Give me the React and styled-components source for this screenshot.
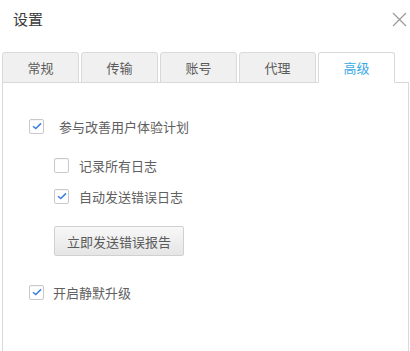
import React, { useState } from 'react'
import styled, { createGlobalStyle } from 'styled-components'

const GlobalStyle = createGlobalStyle`
  html, body {
    margin: 0;
    padding: 0;
    background: #ffffff;
  }
  body {
    font-family: "Noto Sans CJK SC", "Noto Sans", sans-serif;
  }
`

const Window = styled.div`
  width: 410px;
  height: 351px;
  background: #ffffff;
  overflow: hidden;
  display: flex;
  flex-direction: column;
`

const Header = styled.div`
  height: 52px;
  display: flex;
  align-items: flex-start;
  justify-content: space-between;
  padding: 9px 3px 0 13px;
  box-sizing: border-box;
`

const Title = styled.div`
  font-size: 15px;
  line-height: 20px;
  color: #3a3a3a;
`

const Close = styled.button`
  border: 0;
  background: none;
  padding: 0;
  margin-top: 3px;
  width: 15px;
  height: 15px;
  display: flex;
  cursor: pointer;
`

const TabBar = styled.div`
  display: flex;
  gap: 2px;
  padding-left: 2px;
  margin-bottom: -1px;
  position: relative;
  z-index: 1;
`

const Tab = styled.div`
  width: 77px;
  height: 31px;
  box-sizing: border-box;
  display: flex;
  align-items: center;
  justify-content: center;
  border: 1px solid #d9d9d9;
  border-bottom-color: ${p => (p.$active ? '#ffffff' : '#d9d9d9')};
  border-radius: 3px 3px 0 0;
  background: ${p => (p.$active ? '#ffffff' : '#f0f0f0')};
  color: ${p => (p.$active ? '#3aa9e4' : '#5a5a5a')};
  font-size: 13px;
  cursor: pointer;
`

const Panel = styled.div`
  flex: 1;
  margin-left: 2px;
  width: 407px;
  box-sizing: border-box;
  border: 1px solid #d9d9d9;
  border-bottom: 0;
  padding: 33px 0 0 26px;
  display: flex;
  flex-direction: column;
  align-items: flex-start;
`

const Row = styled.label`
  display: flex;
  align-items: center;
  gap: ${p => p.$gap}px;
  height: 20px;
  margin-left: ${p => p.$indent || 0}px;
  margin-top: ${p => p.$top || 0}px;
  font-size: 13px;
  color: #606060;
  cursor: pointer;
`

const Box = styled.span`
  width: 15px;
  height: 15px;
  box-sizing: border-box;
  border: 1px solid #c9c9c9;
  border-radius: 2px;
  background: #ffffff;
  box-shadow: inset 0 1px 1px rgba(0, 0, 0, 0.04);
  display: flex;
  align-items: center;
  justify-content: center;
`

const Button = styled.button`
  margin: 20px 0 0 25px;
  width: 130px;
  height: 30px;
  border: 1px solid #d0d0d0;
  border-radius: 2px;
  background: linear-gradient(#f8f8f8, #e5e5e5);
  font-family: inherit;
  font-size: 13px;
  color: #5a5a5a;
  padding: 0;
  cursor: pointer;
`

const Check = ({ checked, onToggle }) => (
  <Box onClick={onToggle}>
    {checked && (
      <svg width="10" height="8" viewBox="0 0 10 8">
        <path d="M1 4.2 L3.8 6.6 L9 1.4" fill="none" stroke="#3b7fe0" strokeWidth="1.5" />
      </svg>
    )}
  </Box>
)

const tabs = ['常规', '传输', '账号', '代理', '高级']

const App = () => {
  const [active, setActive] = useState(4)
  const [opts, setOpts] = useState({ join: true, all: false, auto: true, silent: true })
  const toggle = k => () => setOpts(o => ({ ...o, [k]: !o[k] }))

  return (
    <Window>
      <GlobalStyle />
      <Header>
        <Title>设置</Title>
        <Close>
          <svg width="15" height="15" viewBox="0 0 15 15">
            <path d="M1 1 L14 14 M14 1 L1 14" stroke="#9a9a9a" strokeWidth="1.2" />
          </svg>
        </Close>
      </Header>
      <TabBar>
        {tabs.map((t, i) => (
          <Tab key={t} $active={i === active} onClick={() => setActive(i)}>
            {t}
          </Tab>
        ))}
      </TabBar>
      <Panel>
        <Row $gap={15}>
          <Check checked={opts.join} onToggle={toggle('join')} />
          参与改善用户体验计划
        </Row>
        <Row $gap={10} $indent={25} $top={19}>
          <Check checked={opts.all} onToggle={toggle('all')} />
          记录所有日志
        </Row>
        <Row $gap={10} $indent={25} $top={11}>
          <Check checked={opts.auto} onToggle={toggle('auto')} />
          自动发送错误日志
        </Row>
        <Button>立即发送错误报告</Button>
        <Row $gap={9} $top={26}>
          <Check checked={opts.silent} onToggle={toggle('silent')} />
          开启静默升级
        </Row>
      </Panel>
    </Window>
  )
}

export default App
